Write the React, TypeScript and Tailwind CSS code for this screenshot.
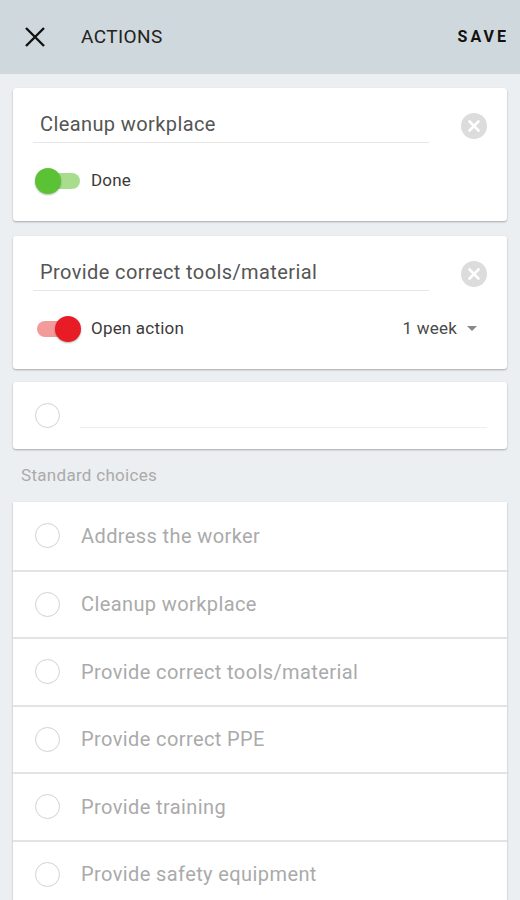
import React from "react";

const choices = [
  "Address the worker",
  "Cleanup workplace",
  "Provide correct tools/material",
  "Provide correct PPE",
  "Provide training",
  "Provide safety equipment",
];

function ClearIcon() {
  return (
    <svg width="26" height="26" viewBox="0 0 26 26">
      <circle cx="13" cy="13" r="13" fill="#dcdcdc" />
      <path d="M8.5 8.5l9 9M17.5 8.5l-9 9" stroke="#fff" strokeWidth="2.6" strokeLinecap="round" />
    </svg>
  );
}

function Radio() {
  return <span className="block h-[25px] w-[25px] shrink-0 rounded-full border-[1.5px] border-[#d2d2d2] bg-white" />;
}

function ActionCard({ title, on, color, label, due }: { title: string; on: boolean; color: "green" | "red"; label: string; due?: string }) {
  const track = color === "green" ? "bg-[#a8dd8e]" : "bg-[#f39a9a]";
  const thumb = color === "green" ? "bg-[#5bc236]" : "bg-[#e81c24]";
  return (
    <div className="mx-[13px] rounded-[3px] bg-white pl-[20px] pr-[20px] pt-[24px] pb-[27px] shadow-[0_1px_2px_rgba(0,0,0,0.3)]">
      <div className="flex items-center">
        <div className="flex-1 border-b border-[#e6e6e6] pb-[6px] pl-[7px] text-[20px] leading-[24px] tracking-[0.4px] text-[#555]">{title}</div>
        <div className="ml-[32px] mb-[4px]">
          <ClearIcon />
        </div>
      </div>
      <div className="mt-[25px] flex h-[26px] items-center">
        <div className={`relative ml-[4px] h-[16px] w-[43px] rounded-full ${track}`}>
          <span
            className={`absolute top-[-5px] h-[26px] w-[26px] rounded-full shadow-[0_1px_2px_rgba(0,0,0,0.3)] ${thumb} ${on ? "right-[-1px]" : "left-[-2px]"}`}
          />
        </div>
        <span className="ml-[11px] text-[17px] tracking-[0.2px] text-[#3a3a3a]">{label}</span>
        {due && (
          <span className="ml-auto mr-[10px] flex items-center text-[17px] tracking-[0.2px] text-[#4a4a4a]">
            {due}
            <svg className="ml-[10px]" width="10" height="6" viewBox="0 0 10 6">
              <path d="M0 0h10L5 5z" fill="#888" />
            </svg>
          </span>
        )}
      </div>
    </div>
  );
}

export default function App() {
  return (
    <div className="min-h-[900px] bg-[#eceff1] font-['Roboto',sans-serif]">
      {/* Header */}
      <div className="flex h-[74px] items-center bg-[#cfd8dc] pl-[24px] pr-[11px]">
        <svg width="22" height="22" viewBox="0 0 22 22">
          <path d="M2 2l18 18M20 2L2 20" stroke="#111" strokeWidth="2.4" />
        </svg>
        <span className="ml-[35px] text-[19px] tracking-[0.4px] text-[#222]">ACTIONS</span>
        <span className="ml-auto text-[16px] font-bold tracking-[3px] text-[#111]">SAVE</span>
      </div>

      <div className="pt-[14px]">
        <ActionCard title="Cleanup workplace" on={false} color="green" label="Done" />
        <div className="h-[15px]" />
        <ActionCard title="Provide correct tools/material" on={true} color="red" label="Open action" due="1 week" />
        <div className="h-[13px]" />

        {/* New action */}
        <div className="mx-[13px] flex h-[67px] items-center rounded-[3px] bg-white pl-[22px] pr-[20px] shadow-[0_1px_2px_rgba(0,0,0,0.3)]">
          <Radio />
          <div className="ml-[20px] mt-[24px] flex-1 border-b border-[#ededed]" />
        </div>

        <div className="px-[21px] pt-[14px] pb-[15px] text-[17px] leading-[24px] tracking-[0.3px] text-[#aaa]">Standard choices</div>

        {/* Standard choices list */}
        <div className="mx-[13px] overflow-hidden bg-white shadow-[0_1px_2px_rgba(0,0,0,0.25)]">
          {choices.map((c, i) => (
            <div
              key={c}
              className={`flex h-[67.5px] items-center pl-[22px] ${i > 0 ? "border-t-[2px] border-[#e3e3e3]" : ""}`}
            >
              <Radio />
              <span className="ml-[21px] text-[20px] tracking-[0.4px] text-[#aaa]">{c}</span>
            </div>
          ))}
        </div>
      </div>
    </div>
  );
}
